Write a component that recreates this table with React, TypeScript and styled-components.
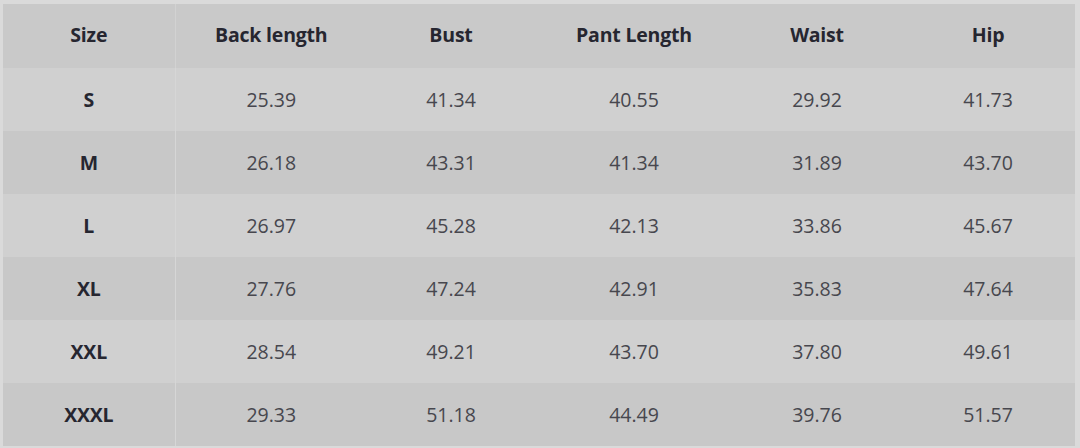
import React from "react";
import styled, { createGlobalStyle } from "styled-components";

const Global = createGlobalStyle`
  html, body { margin: 0; padding: 0; background: #dadada; }
  body { font-family: "Open Sans", "Noto Sans", sans-serif; }
`;

const Frame = styled.div`
  width: 1080px;
  height: 448px;
  box-sizing: border-box;
  padding: 4px 5px 2px 3px;
  background: #dadada;
`;

const Table = styled.table`
  width: 100%;
  height: 100%;
  border-collapse: collapse;
  table-layout: fixed;
`;

const HeadCell = styled.th<{ $first?: boolean }>`
  background: #c9c9c9;
  color: #262630;
  font-weight: 700;
  font-size: 19.5px;
  letter-spacing: -0.2px;
  text-align: center;
  height: 64px;
  padding: 0 0 3px 0;
  box-sizing: border-box;
  border-right: ${(p) => (p.$first ? "1px solid #d2d2d2" : "none")};
`;

const Row = styled.tr<{ $alt: boolean }>`
  background: ${(p) => (p.$alt ? "#c8c8c8" : "#d0d0d0")};
`;

const Cell = styled.td<{ $label?: boolean }>`
  text-align: center;
  height: 63px;
  padding: 0;
  font-size: 19.5px;
  letter-spacing: ${(p) => (p.$label ? "-0.2px" : "0")};
  color: ${(p) => (p.$label ? "#262630" : "#47474e")};
  font-weight: ${(p) => (p.$label ? 700 : 400)};
  border-right: ${(p) => (p.$label ? "1px solid #d6d6d6" : "none")};
`;

const widths = [172, 192, 168, 198, 168, 174];
const headers = ["Size", "Back length", "Bust", "Pant Length", "Waist", "Hip"];
const rows: string[][] = [
  ["S", "25.39", "41.34", "40.55", "29.92", "41.73"],
  ["M", "26.18", "43.31", "41.34", "31.89", "43.70"],
  ["L", "26.97", "45.28", "42.13", "33.86", "45.67"],
  ["XL", "27.76", "47.24", "42.91", "35.83", "47.64"],
  ["XXL", "28.54", "49.21", "43.70", "37.80", "49.61"],
  ["XXXL", "29.33", "51.18", "44.49", "39.76", "51.57"],
];

export default function App() {
  return (
    <>
      <Global />
      <Frame>
        <Table>
          <colgroup>
            {widths.map((w, i) => (
              <col key={i} style={{ width: w }} />
            ))}
          </colgroup>
          <thead>
            <tr>
              {headers.map((h, i) => (
                <HeadCell key={h} $first={i === 0}>
                  {h}
                </HeadCell>
              ))}
            </tr>
          </thead>
          <tbody>
            {rows.map((r, i) => (
              <Row key={r[0]} $alt={i % 2 === 1}>
                {r.map((v, j) => (
                  <Cell key={j} $label={j === 0}>
                    {v}
                  </Cell>
                ))}
              </Row>
            ))}
          </tbody>
        </Table>
      </Frame>
    </>
  );
}
